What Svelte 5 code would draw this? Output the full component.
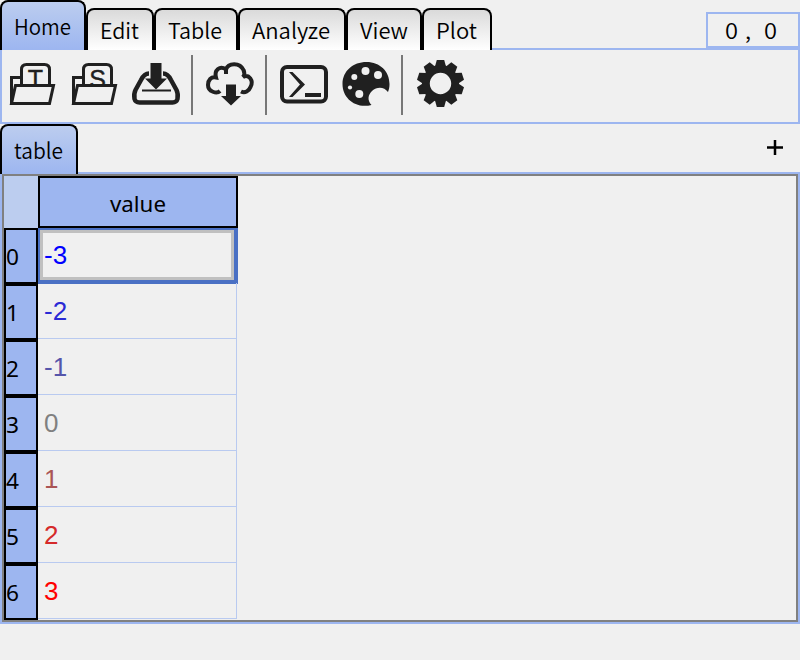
<script>
  const tabs = [
    { name: 'Home', width: 86, text: 57 },
    { name: 'Edit', width: 68, text: 39 },
    { name: 'Table', width: 84, text: 54 },
    { name: 'Analyze', width: 108, text: 78 },
    { name: 'View', width: 76, text: 48 },
    { name: 'Plot', width: 70, text: 41 }
  ];
  const rows = [
    { value: -3, color: '#0000ff' },
    { value: -2, color: '#2a2ad5' },
    { value: -1, color: '#5555aa' },
    { value: 0, color: '#808080' },
    { value: 1, color: '#aa5555' },
    { value: 2, color: '#d52a2a' },
    { value: 3, color: '#ff0000' }
  ];
  const teeth = Array.from({ length: 10 }, (_, i) => i * 36);
</script>

{#snippet label(text, width, cls)}
  <svg class="label {cls}" {width} height="30" aria-label={text}>
    <text x="0" y="22" textLength={width} lengthAdjust="spacingAndGlyphs">{text}</text>
  </svg>
{/snippet}

{#snippet folder(letter)}
  <svg width="62" height="56" viewBox="0 0 62 56">
    <path class="line" d="M20 27.5H11.5V53M21.5 34V19.5Q21.5 14.5 26.500 14.5H44.500Q49.5 14.5 49.5 19.5V34" stroke-width="3" />
    <text class="letter" x="35.5" y="38" text-anchor="middle">{letter}</text>
    <path class="line" d="M15.5 35.5H53.5L49.5 53.5H11.500Z" fill-opacity="1" stroke-width="3" style:fill="#f0f0f0" />
  </svg>
{/snippet}

<div class="app">
  <header>
    <nav>
      {#each tabs as tab, i}
        <button class="tab" class:active={i === 0} style="width: {tab.width}px">
          {@render label(tab.name, tab.text, 'gothic')}
        </button>
      {/each}
    </nav>
    <div class="coords">
      {@render label('0', 13, 'gothic')}
      {@render label(',', 6, 'gothic')}
      {@render label('0', 13, 'gothic')}
    </div>
  </header>

  <section class="toolbar">
    {@render folder('T')}
    {@render folder('S')}
    <svg class="store" width="65" height="56" viewBox="0 0 65 56">
      <path class="line" d="M24 23.5C20 23.5 18 26 16 30L10.500 40C9 43 9 46 9.500 49Q10.500 52.5 14.500 52.5H47.500Q51.500 52.5 52.500 49C53 46 53 43 51.500 40L46 30C44 26 42 23.500 38 23.500" stroke-width="4.500" />
      <path class="fill" d="M25.500 13H36.500V28.500H42L31 39.500L20 28.500H25.500Z" />
      <path class="line" d="M17 40.500H46" stroke-width="2" />
    </svg>
    <i class="separator"></i>
    <svg width="72" height="56" viewBox="193 50 72 56">
      <path class="line" d="M220 91C217 94 208 92 208 85C208 80 211 76.500 216 77.500C214 70 220 65 226 69.500C228 62.500 240 62 243.500 70C244.500 72 244.500 75 243 77C249 73.500 254 81 250.500 87C249 91 245 93.500 241 91.500M226 69.500V74" stroke-width="4" />
      <path class="fill" d="M226 84.500H236V96H241L231 105.500L221 96H226Z" />
    </svg>
    <i class="separator"></i>
    <svg width="65" height="56" viewBox="267 50 65 56">
      <rect class="line" x="282" y="67" width="44" height="34.500" rx="5" stroke-width="4" />
      <path class="fill" d="M289 72H292.500L305 84.500L292.500 97H289L300 84.500ZM305 93H321V97H305Z" />
    </svg>
    <svg width="69" height="56" viewBox="332 50 69 56">
      <path class="fill" d="M366.500 62C380 62 389.500 71.500 389.500 84C389.500 87 389 89.500 388 92C384 86.500 377 86.500 372 91C368 95 367 100 371.500 105C355 109 342.500 98 342.500 84C342.500 71 353 62 366.500 62Z" />
      <g fill="#f0f0f0"><circle cx="365.500" cy="71" r="4" /><circle cx="378" cy="75" r="4" /><circle cx="354.300" cy="77" r="3" /><circle cx="350" cy="87.500" r="2.100" /><circle cx="359.300" cy="94" r="4" /></g>
    </svg>
    <i class="separator"></i>
    <svg width="70" height="60" viewBox="403 50 70 60">
      <g transform="translate(440.500 83.500)">
        {#each teeth as angle}
          <path class="fill" d="M-5.500 -17L-3.700 -23.500H3.700L5.500 -17Z" transform="rotate({angle})" />
        {/each}
        <circle class="line" r="14.600" stroke-width="7.800" />
      </g>
    </svg>
  </section>

  <div class="sheetbar">
    <button class="tab sheet">{@render label('table', 49, 'gothic')}</button>
    <button class="add" aria-label="Add table">
      <svg width="16" height="16"><path d="M0 7.500H16M8 0V15" stroke="#000" stroke-width="2.500" /></svg>
    </button>
  </div>

  <main>
    <div class="pane">
      <div class="grid">
        <div class="corner"></div>
        <div class="column">{@render label('value', 56, 'humanist')}</div>
        {#each rows as row, i}
          <div class="index">{@render label(String(i), 13, 'humanist')}</div>
          <div class="cell" class:selected={i === 0} style="color: {row.color}"><span>{row.value}</span></div>
        {/each}
      </div>
    </div>
  </main>
</div>

<style>
  :global(body) { background: #f0f0f0; }
  .app { width: 800px; height: 660px; box-sizing: border-box; overflow: hidden; background: #f0f0f0; color: #000; font-family: "Liberation Sans", Arial, sans-serif; }
  svg { display: block; flex: none; }
  header { display: flex; justify-content: space-between; height: 50px; position: relative; z-index: 1; }
  nav { display: flex; align-items: flex-end; }
  .tab { box-sizing: border-box; height: 42px; padding: 7px 0 0 12px; border: 2px solid #000; border-bottom: 0; border-radius: 8px 8px 0 0; background: linear-gradient(#dadada, #fff); display: flex; align-items: flex-start; }
  .tab.active, .sheet { height: 50px; padding-top: 11px; padding-left: 12px; background: linear-gradient(#bccdef, #9db6f0); }
  .label { overflow: visible; }
  .label text { font-size: 22px; fill: #000; }
  .gothic text { font-family: "Noto Sans CJK JP", sans-serif; font-weight: 350; }
  .humanist text { font-family: "Noto Sans", sans-serif; }
  .coords { box-sizing: border-box; width: 94px; height: 36px; margin-top: 12px; padding: 3px 0 0 17px; border: 2px solid #9db6f0; display: flex; }
  .coords :global(svg:nth-child(2)) { margin: 0 13px 0 7px; }
  .toolbar { box-sizing: border-box; height: 76px; margin-top: -2px; border: 2px solid #9db6f0; display: flex; align-items: flex-start; }
  .toolbar > svg { overflow: visible; }
  .toolbar > svg:first-child { margin-left: -2px; }
  .toolbar > svg.store { margin-left: 1px; margin-right: 1px; }
  .separator { flex: none; width: 2px; height: 60px; margin-top: 5px; background: #777; }
  .line { fill: none; stroke: #202020; }
  .fill { fill: #202020; }
  .letter { font: 25px "Liberation Sans", Arial, sans-serif; fill: #202020; stroke: #202020; stroke-width: .4px; }
  .sheetbar { height: 50px; display: flex; justify-content: space-between; position: relative; z-index: 1; }
  .sheet { width: 78px; }
  .add { border: 0; background: none; padding: 16px 17px 0 0; display: flex; align-items: flex-start; }
  main { box-sizing: border-box; height: 452px; margin-top: -2px; border: 2px solid #9db6f0; }
  .pane { box-sizing: border-box; height: 448px; border: 2px solid #808080; }
  .grid { width: 234px; display: grid; grid-template-columns: 34px 200px; grid-template-rows: 52px; grid-auto-rows: 56px; }
  .corner { background: #bccdef; }
  .column { box-sizing: border-box; border: 2px solid #000; background: #9db6f0; padding: 12px 0 0 70px; }
  .index { box-sizing: border-box; border: 2px solid #000; background: #9db6f0; padding: 13px 0 0; }
  .cell { box-sizing: border-box; position: relative; top: -1px; width: 199px; height: 56px; border: solid #b9caf0; border-width: 0 1px 1px 0; padding: 14px 0 0 6px; font-size: 26px; line-height: 29px; }
  .cell.selected { top: 0; width: 200px; border: solid #4a70c4; border-width: 2px 4px 4px 2px; padding: 0; box-shadow: inset 0 0 0 3px #c0c0c0; }
  .selected span { display: block; padding: 11px 0 0 4px; }
</style>
